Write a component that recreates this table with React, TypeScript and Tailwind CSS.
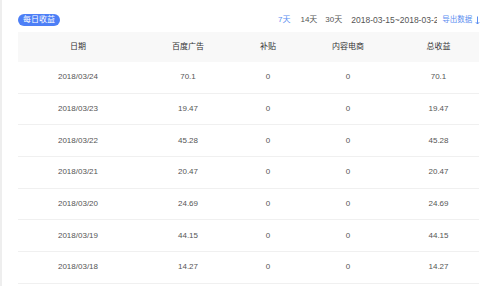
const ROWS = [
  { date: '2018/03/24', baidu: '70.1', subsidy: '0', ecommerce: '0', total: '70.1' },
  { date: '2018/03/23', baidu: '19.47', subsidy: '0', ecommerce: '0', total: '19.47' },
  { date: '2018/03/22', baidu: '45.28', subsidy: '0', ecommerce: '0', total: '45.28' },
  { date: '2018/03/21', baidu: '20.47', subsidy: '0', ecommerce: '0', total: '20.47' },
  { date: '2018/03/20', baidu: '24.69', subsidy: '0', ecommerce: '0', total: '24.69' },
  { date: '2018/03/19', baidu: '44.15', subsidy: '0', ecommerce: '0', total: '44.15' },
  { date: '2018/03/18', baidu: '14.27', subsidy: '0', ecommerce: '0', total: '14.27' },
];

// column widths: 日期 / 百度广告 / 补贴 / 内容电商 / 总收益
const COLS = 'grid grid-cols-[120px_100px_60px_100px_81px]';

export default function App() {
  return (
    <div
      className="h-[286px] w-[500px] overflow-hidden bg-white"
      style={{ fontFamily: '"Liberation Sans", "Noto Sans CJK SC", sans-serif' }}
    >
      <div className="flex h-full">
        <div className="w-[2px] shrink-0 bg-[#eeeeee]" />
        <div className="w-[478px] shrink-0 overflow-hidden pl-[16px]">
          {/* Toolbar */}
          <div className="flex h-[32px] items-start whitespace-nowrap pt-[14px]">
            <span className="flex h-[12px] w-[42px] shrink-0 items-center justify-center rounded-full bg-[#4d7ff6] text-[8px] leading-none text-white">
              每日收益
            </span>
            <div className="ml-[218px] flex shrink-0 items-center text-[8px] leading-[12px] text-[#555]">
              <span className="text-[#5b8ef0]">7天</span>
              <span className="ml-[10px]">14天</span>
              <span className="ml-[8px]">30天</span>
              <span className="ml-[9px] w-[86px] overflow-hidden text-[8.5px]">2018-03-15~2018-03-25</span>
              <span className="ml-[5px] flex items-center text-[7.5px] text-[#5b8ef0]">
                导出数据
                <svg className="ml-[3px]" width="5" height="9" viewBox="0 0 5 9" fill="none" stroke="currentColor" strokeWidth="1">
                  <path d="M2.5 0.5v7.5" />
                  <path d="M0.8 6.2l1.7 1.8 1.7-1.8" />
                </svg>
              </span>
            </div>
          </div>

          {/* Table */}
          <div className="w-[461px]">
            <div className={`${COLS} h-[30px] items-center bg-[#f8f8f8] text-center text-[8px] text-[#333]`}>
              <span>日期</span>
              <span>百度广告</span>
              <span>补贴</span>
              <span>内容电商</span>
              <span>总收益</span>
            </div>
            {ROWS.map((row) => (
              <div
                key={row.date}
                className={`${COLS} h-[31.7px] items-center border-b border-[#f0f0f0] text-center text-[8px] text-[#555]`}
              >
                <span>{row.date}</span>
                <span>{row.baidu}</span>
                <span>{row.subsidy}</span>
                <span>{row.ecommerce}</span>
                <span>{row.total}</span>
              </div>
            ))}
          </div>
        </div>
      </div>
    </div>
  );
}
